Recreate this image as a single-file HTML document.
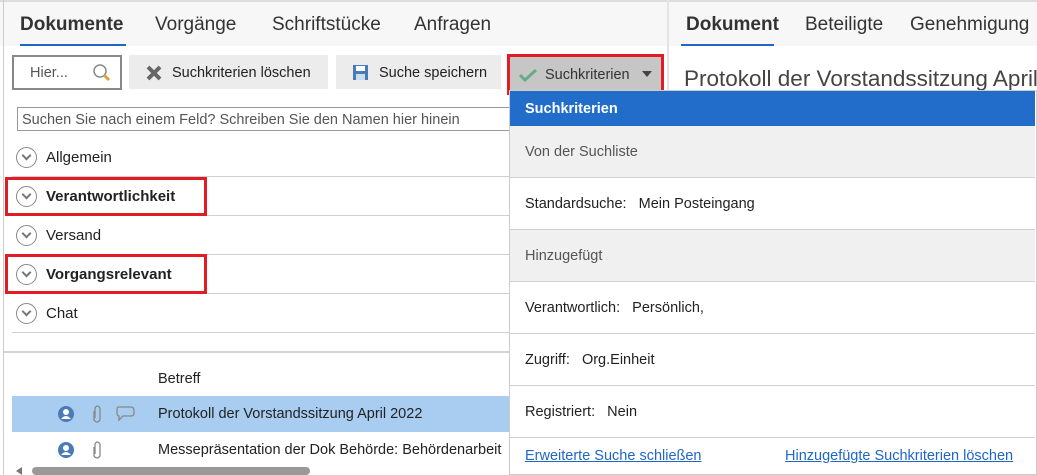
<!DOCTYPE html>
<html><head><meta charset="utf-8"><style>
*{box-sizing:border-box;margin:0;padding:0}
body{width:1037px;height:475px;overflow:hidden;background:#fff;font-family:"Segoe UI","Liberation Sans",sans-serif;color:#222;position:relative}
.a{position:absolute}
.tab{position:absolute;top:14px;font-size:19px;color:#333}
.btn{position:absolute;top:55px;height:34px;background:#ececec;font-size:14.5px;color:#222;line-height:36px}
.row{position:absolute;left:12px;width:497px;height:39px;border-bottom:1px solid #d0d0d0;font-size:15px;line-height:40px;padding-left:34px}
.row .c{position:absolute;left:4px;top:9px;width:21px;height:21px;border:1.5px solid #888;border-radius:50%}
.row .c:after{content:"";position:absolute;left:6px;top:4px;width:5px;height:5px;border-right:2px solid #777;border-bottom:2px solid #777;transform:rotate(45deg)}
.red{position:absolute;border:3px solid #e21b25}
.dr{position:absolute;left:510px;width:525px;height:52px;border-bottom:1px solid #d0d0d0;font-size:14.5px;line-height:52px;padding-left:15px}
.g{background:#f0f0f0;color:#555}
a{color:#1f66c6;text-decoration:underline;font-size:14.5px}
</style></head><body>
<div class="a" style="left:0;top:0;width:1037px;height:46px;background:#f7f7f7;border-top:2px solid #ddd"></div>
<div class="a" style="left:3px;top:0;width:1px;height:475px;background:#ccc"></div>
<div class="a" style="left:667px;top:0;width:2px;height:90px;background:#e4e4e4"></div>
<div class="tab" style="left:20px;font-weight:bold">Dokumente</div>
<div class="a" style="left:20px;top:44px;width:106px;height:2px;background:#1f66c6"></div>
<div class="tab" style="left:155px">Vorgänge</div>
<div class="tab" style="left:272px">Schriftstücke</div>
<div class="tab" style="left:414px">Anfragen</div>
<div class="tab" style="left:686px;font-weight:bold">Dokument</div>
<div class="a" style="left:681px;top:44px;width:93px;height:2px;background:#1f66c6"></div>
<div class="tab" style="left:805px">Beteiligte</div>
<div class="tab" style="left:910px">Genehmigung</div>

<div class="a" style="left:12px;top:55px;width:110px;height:35px;border:2px solid #888;font-size:14.5px;color:#555;line-height:33px;padding-left:16px">Hier...
<svg class="a" style="left:78px;top:6px" width="20" height="20"><circle cx="8" cy="8" r="6" fill="none" stroke="#888" stroke-width="1.5"/><line x1="12" y1="12" x2="17" y2="17" stroke="#d9a340" stroke-width="3"/></svg></div>
<div class="btn" style="left:129px;width:199px;padding-left:43px">Suchkriterien löschen
<svg class="a" style="left:17px;top:10px" width="16" height="16"><path d="M2 2L14 14M14 2L2 14" stroke="#666" stroke-width="4"/></svg></div>
<div class="btn" style="left:336px;width:165px;padding-left:43px">Suche speichern
<svg class="a" style="left:17px;top:10px" width="15" height="15"><rect x="0" y="0" width="15" height="15" fill="#4a7bb7"/><rect x="3" y="1" width="9" height="5" fill="#fff"/><rect x="3" y="9" width="9" height="6" fill="#cde"/></svg></div>
<div class="a" style="left:507px;top:54px;width:157px;height:41px;border:3px solid #e21b25;background:#c6c6c6;font-size:14.5px;color:#333;line-height:37px;padding-left:35px">Suchkriterien
<svg class="a" style="left:9px;top:11px" width="18" height="14"><path d="M1 7L6 12L17 2" stroke="#6aaa88" stroke-width="3" fill="none"/></svg>
<svg class="a" style="left:132px;top:14px" width="10" height="6"><path d="M0 0H10L5 6Z" fill="#444"/></svg></div>
<div class="tab" style="left:684px;top:66px;font-size:22.5px;color:#444;white-space:nowrap">Protokoll der Vorstandssitzung April 2</div>

<div class="a" style="left:17px;top:107px;width:495px;height:24px;border:1px solid #999;font-size:14.5px;color:#555;line-height:24px;padding-left:4px;white-space:nowrap;overflow:hidden">Suchen Sie nach einem Feld? Schreiben Sie den Namen hier hinein</div>

<div class="row" style="top:138px">Allgemein<span class="c"></span></div>
<div class="row" style="top:177px;font-weight:bold">Verantwortlichkeit<span class="c"></span></div>
<div class="row" style="top:216px">Versand<span class="c"></span></div>
<div class="row" style="top:255px;font-weight:bold">Vorgangsrelevant<span class="c"></span></div>
<div class="row" style="top:294px">Chat<span class="c"></span></div>
<div class="red" style="left:5px;top:177px;width:202px;height:39px"></div>
<div class="red" style="left:5px;top:254px;width:202px;height:40px"></div>
<div class="a" style="left:4px;top:351px;width:506px;height:2px;background:#d4d4d4"></div>

<div class="a" style="left:158px;top:371px;font-size:14.5px">Betreff</div>
<div class="a" style="left:12px;top:396px;width:498px;height:36px;background:#a8cdf0"></div>
<div class="a" style="left:158px;top:406px;font-size:14.5px">Protokoll der Vorstandssitzung April 2022</div>
<div class="a" style="left:158px;top:442px;font-size:14.5px;white-space:nowrap">Messepräsentation der Dok Behörde: Behördenarbeit</div>
<svg class="a" style="left:56px;top:403px" width="80" height="58">
<circle cx="10" cy="11" r="8" fill="#4a7bb7"/><circle cx="10" cy="9" r="3" fill="#fff"/><path d="M5 16Q10 10 15 16" fill="#fff"/>
<circle cx="10" cy="47" r="8" fill="#4a7bb7"/><circle cx="10" cy="45" r="3" fill="#fff"/><path d="M5 52Q10 46 15 52" fill="#fff"/>
<path d="M38 8V17Q41 21 44 17V5Q41 1 39 5V15" fill="none" stroke="#888" stroke-width="1.3"/>
<path d="M38 44V53Q41 57 44 53V41Q41 37 39 41V51" fill="none" stroke="#888" stroke-width="1.3"/>
<path d="M62 4H75Q78 4 78 8V10Q78 13 75 13H67L63 17V13Q61 13 61 10V8Q61 4 62 4Z" fill="none" stroke="#888" stroke-width="1.3"/>
</svg>
<div class="a" style="left:32px;top:467px;width:278px;height:8px;background:#999;border-radius:4px"></div>
<svg class="a" style="left:16px;top:467px" width="6" height="8"><path d="M6 0V8L0 4Z" fill="#777"/></svg>

<div class="a" style="left:509px;top:90px;width:528px;height:385px;border:1px solid #ccc;background:#fff"></div>
<div class="a" style="left:510px;top:91px;width:525px;height:35px;background:#226dc9;color:#fff;font-weight:bold;font-size:14.5px;line-height:37px;padding-left:15px">Suchkriterien</div>
<div class="dr g" style="top:126px">Von der Suchliste</div>
<div class="dr" style="top:178px">Standardsuche:&nbsp;&nbsp; Mein Posteingang</div>
<div class="dr g" style="top:230px">Hinzugefügt</div>
<div class="dr" style="top:282px">Verantwortlich:&nbsp;&nbsp; Persönlich,</div>
<div class="dr" style="top:334px">Zugriff:&nbsp;&nbsp; Org.Einheit</div>
<div class="dr" style="top:386px">Registriert:&nbsp;&nbsp; Nein</div>
<a class="a" style="left:525px;top:448px">Erweiterte Suche schließen</a>
<a class="a" style="left:785px;top:448px">Hinzugefügte Suchkriterien löschen</a>
</body></html>
